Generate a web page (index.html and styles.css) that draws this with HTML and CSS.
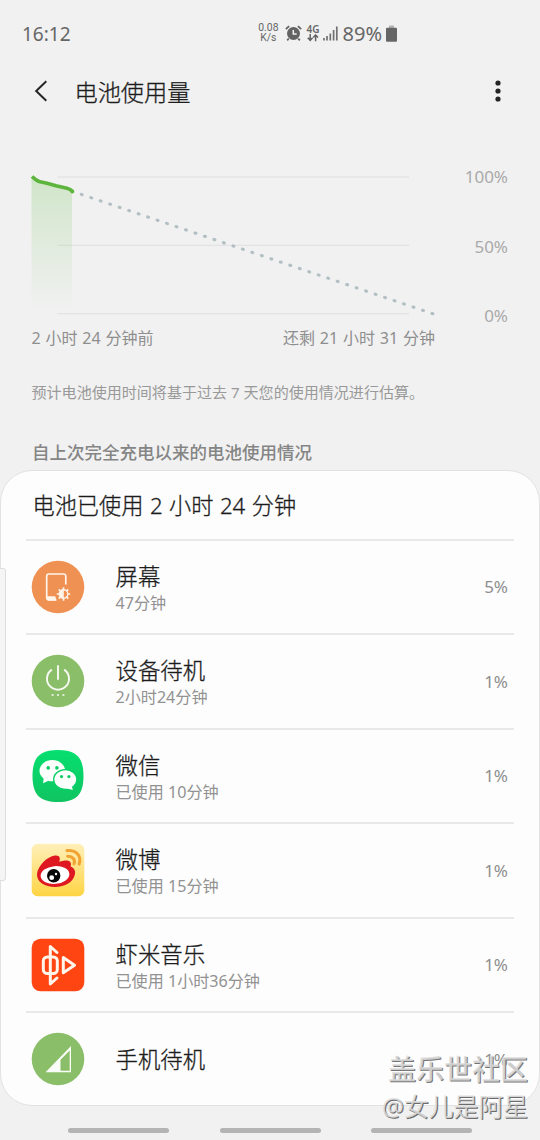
FILE: index.html
```html
<!DOCTYPE html>
<html lang="zh-CN">
<head>
<meta charset="utf-8">
<title>电池使用量</title>
<link rel="stylesheet" href="styles.css">
</head>
<body>
<div class="screen">
  <header class="status">
    <span class="clock">16:12</span>
    <span class="rate">0.08<br>K/s</span>
    <svg class="alarm" width="17" height="17" viewBox="0 0 17 17">
      <circle cx="8.5" cy="8.5" r="6.5" fill="#636363"/>
      <path d="M.9 4.2 4.1 1.2M16.1 4.2 12.9 1.2M3.8 13.5 2.2 15.4M13.2 13.5l1.6 1.9" stroke="#636363" stroke-width="1.8" fill="none"/>
      <path d="M8.3 5v4h3.4" stroke="#f1f1f1" stroke-width="1.5" fill="none"/>
    </svg>
    <span class="net"><span>4G</span>
      <svg width="12" height="8" viewBox="0 0 12 8"><path d="M3.2 0v6M.8 3.8l2.4 2.6 2.4-2.6M8.6 7.3v-6M6.2 3.6 8.6 1 11 3.6" stroke="#636363" stroke-width="1.5" fill="none"/></svg>
    </span>
    <svg class="signal" width="15" height="15" viewBox="0 0 15 15"><path d="M1 12v2.5M4 10v4.500M7.300 7.500v7M10.600 4v10.500M13.800 .5v14" stroke="#707070" stroke-width="1.700"/></svg>
    <span class="level">89%</span>
    <svg class="cell" width="11" height="17" viewBox="0 0 11 17"><path d="M3 .5h5v3H3z" fill="#b5b5b5"/><rect x="0" y="2.700" width="11" height="14" rx="1" fill="#666"/></svg>
  </header>

  <nav class="appbar">
    <svg class="back" width="14" height="22" viewBox="0 0 14 22"><path d="M12.300 1.300 2.200 11l10.100 9.700" stroke="#252525" stroke-width="2" fill="none"/></svg>
    <h1>电池使用量</h1>
    <svg class="more" width="6" height="22" viewBox="0 0 6 22" fill="#252525"><circle cx="3" cy="3" r="2.600"/><circle cx="3" cy="11" r="2.600"/><circle cx="3" cy="19" r="2.600"/></svg>
  </nav>

  <section class="chart">
    <svg class="plot" width="420" height="160" viewBox="25 165 420 160">
      <defs><linearGradient id="fade" x1="0" y1="0" x2="0" y2="1"><stop offset="0" stop-color="#69bf4b" stop-opacity=".24"/><stop offset=".5" stop-color="#69bf4b" stop-opacity=".12"/><stop offset="1" stop-color="#69bf4b" stop-opacity="0"/></linearGradient></defs>
      <path d="M57.500 177H409M57.500 245.300H409M57.500 313.600H409" stroke="#e3e3e3" stroke-width="1.300"/>
      <path d="M31.500 177 39 181.500 47 183.500 56 186 68 188.500 72 191V311H31.500Z" fill="url(#fade)"/>
      <path d="M32 176.500C35 179.500 37 180.500 39 181.500L47 183.300 56 185.800 67 188.200Q70.500 189 72.300 191.200" stroke="#5db53d" stroke-width="3.700" fill="none" stroke-linejoin="round"/>
      <circle cx="72.300" cy="191.400" r="2" fill="#5db53d"/>
      <path d="M81.300 194.400 433 313.800" stroke="#b2bfc3" stroke-width="3.100" stroke-linecap="round" stroke-dasharray=".9 9.110" fill="none"/>
    </svg>
    <div class="scale"><span>100%</span><span>50%</span><span>0%</span></div>
  </section>
  <div class="span"><span>2 小时 24 分钟前</span><span>还剩 21 小时 31 分钟</span></div>
  <p class="note">预计电池使用时间将基于过去 7 天您的使用情况进行估算。</p>
  <h2>自上次完全充电以来的电池使用情况</h2>

  <main class="card">
    <h3>电池已使用 2 小时 24 分钟</h3>
    <ul>
      <li>
        <svg class="icon" viewBox="0 0 54 54"><circle cx="27" cy="27" r="26.300" fill="#f09154"/>
          <path d="M34.800 24.500V16.300q0-2.300-2.300-2.300H18q-2.300 0-2.300 2.300v21.200q0 2.300 2.300 2.300h7" stroke="#fff4ea" stroke-width="1.700" fill="none"/><path d="M15.500 36.300h8.600l1.700 4.200H18q-2.500 0-2.500-3z" fill="#fff4ea"/>
          <circle cx="32.500" cy="34" r="4.900" fill="#fff4ea"/><path d="M32.800 30.600v6.800a3.400 3.400 0 0 0 0-6.800z" fill="#f09154"/>
          <path d="M32.500 27.300v3M32.500 37.700v3M25.800 34h3M36.200 34h3M27.800 29.300l2 2M35.200 36.700l2 2M27.800 38.700l2-2M35.200 31.300l2-2" stroke="#fff4ea" stroke-width="1.700"/></svg>
        <div class="app"><b>屏幕</b><small>47分钟</small></div><em>5%</em>
      </li>
      <li>
        <svg class="icon" viewBox="0 0 54 54"><circle cx="27" cy="27" r="26.300" fill="#8abe68"/>
          <path d="M20.800 15.600A11 11 0 1 0 33.200 15.600M27 11.300v14.500" stroke="#f7faf3" stroke-width="1.900" fill="none"/><path d="M20.600 41h2M26 41h2M31.400 41h2" stroke="#f7faf3" stroke-width="1.700"/></svg>
        <div class="app"><b>设备待机</b><small>2小时24分钟</small></div><em>1%</em>
      </li>
      <li>
        <svg class="icon" viewBox="0 0 54 54"><defs><linearGradient id="chat" x1="0" y1="0" x2="0" y2="1"><stop stop-color="#06df70"/><stop offset="1" stop-color="#10c461"/></linearGradient></defs>
          <path d="M27 1C45 1 52.500 8 52.500 27S45 53 27 53 1.500 46 1.500 27 9 1 27 1Z" fill="url(#chat)"/>
          <path d="M13 28 12 34.300l5.500-2.600z" fill="#fcfffc"/><ellipse cx="21.300" cy="21.700" rx="12.800" ry="10.600" fill="#fcfffc"/>
          <ellipse cx="34.200" cy="30.400" rx="12.200" ry="10.400" fill="#0bd069"/><ellipse cx="34.300" cy="30.500" rx="10.900" ry="9.200" fill="#fcfffc"/><path d="m35 39.300 6.800 1.800-1-4.200z" fill="#fcfffc"/>
          <g fill="#0ccb66"><circle cx="17.200" cy="18.900" r="1.800"/><circle cx="25.900" cy="18.900" r="1.800"/><circle cx="30.500" cy="27.600" r="1.600"/><circle cx="37.900" cy="27.600" r="1.600"/></g></svg>
        <div class="app"><b>微信</b><small>已使用 10分钟</small></div><em>1%</em>
      </li>
      <li>
        <svg class="icon" viewBox="0 0 54 54"><defs><linearGradient id="sun" x1="0" y1="0" x2="0" y2="1"><stop stop-color="#fff0bb"/><stop offset="1" stop-color="#fed443"/></linearGradient></defs>
          <rect x=".7" y=".7" width="52.600" height="52.600" rx="6" fill="url(#sun)"/>
          <path d="M6 31C7 23 16 13.500 24 12.600c5-.4 5.500 2.600 4.300 6.400 6-2.500 13.500-2.200 11.300 4.500 3.300 1.300 5 4 4.400 7.500C42.500 39 34 44 24 44S5.500 39 6 31Z" fill="#df1720"/>
          <ellipse cx="24" cy="32" rx="14.400" ry="8.900" transform="rotate(-5 24 32)" fill="#fff"/><circle cx="22.700" cy="32.800" r="6.700" fill="#080808"/><circle cx="20.700" cy="34.700" r="2.400" fill="#fff"/><circle cx="25" cy="31" r="1.200" fill="#fff"/>
          <path d="M36.600 13.300c5.200-.2 8 3.300 6.400 7.500M36 7.600c9.500-.8 14.800 5.500 12.200 13.500" stroke="#f1a434" stroke-width="3.100" fill="none" stroke-linecap="round"/></svg>
        <div class="app"><b>微博</b><small>已使用 15分钟</small></div><em>1%</em>
      </li>
      <li>
        <svg class="icon" viewBox="0 0 54 54"><rect x=".7" y=".7" width="52.600" height="52.600" rx="9" fill="#fe4512"/>
          <g fill="none" stroke="#fff5eb" stroke-width="3" stroke-linejoin="round" stroke-linecap="round"><path d="M26 14.500 19.300 8.500V46L26 40"/><rect x="12.300" y="19" width="14" height="16.500" rx="4"/><path d="M32.300 19.500v15.300L43.500 27.200z"/></g></svg>
        <div class="app"><b>虾米音乐</b><small>已使用 1小时36分钟</small></div><em>1%</em>
      </li>
      <li>
        <svg class="icon" viewBox="0 0 54 54"><circle cx="27" cy="27" r="26.300" fill="#8abe68"/><path d="M40 14V40.300H14.500zM38.700 18.500 29.500 27.700v11h9.200z" fill="#fafdf8" fill-rule="evenodd"/></svg>
        <div class="app"><b>手机待机</b></div><em>1%</em>
      </li>
    </ul>
  </main>
  <footer class="keys"><i></i><i></i><i></i></footer>
  <div class="edge"></div>
  <div class="mark"><span class="forum">盖乐世社区</span><span class="author">@女儿是阿星</span></div>
</div>
</body>
</html>
```
FILE: styles.css
```css
* { box-sizing: border-box; margin: 0; padding: 0; }
body { background: #f1f1f1; font-family: "Noto Sans", "Noto Sans CJK SC", sans-serif; }
.screen { position: relative; width: 540px; height: 1140px; overflow: hidden; display: flex; flex-direction: column; }
svg { display: block; flex: none; }
span, h1, h2, h3, p, b, small, em { white-space: nowrap; }

.status { height: 66px; flex: none; display: flex; align-items: center; padding: 0 143px 0 22px; color: #666; }
.clock { font-size: 19px; margin-right: auto; padding-top: 1px; }
.rate { text-align: center; font-family: Roboto, sans-serif; font-size: 10.4px; line-height: 10px; margin-right: 6px; }
.alarm { margin-right: 5px; }
.net { display: flex; flex-direction: column; align-items: center; font-size: 10px; line-height: 9px; font-weight: 600; margin-right: 3px; }
.signal { margin-right: 5px; }
.level { font-size: 20px; margin-right: 4px; }

.appbar { height: 50px; flex: none; display: flex; align-items: center; padding: 0 39px 0 34px; }
.appbar h1 { font-size: 23.2px; font-weight: 300; color: #1c1c1c; -webkit-text-stroke: .3px #1c1c1c; margin: -1px auto 0 26.5px; }

.chart { height: 160px; flex: none; margin-top: 49px; padding: 0 32px 0 25px; display: flex; justify-content: space-between; }
.scale { display: flex; flex-direction: column; justify-content: space-between; height: 161px; padding-top: 2px; text-align: right; font-size: 17px; line-height: 20px; color: #aaa; }
.span { display: flex; justify-content: space-between; width: 403.5px; margin: 1px 0 0 31.5px; font-size: 16px; line-height: 24px; word-spacing: .7px; color: #8e8e8e; }
.note { margin: 29px 0 0 31.5px; font-size: 15.05px; line-height: 26px; color: #999; }
h2 { margin: 34px 0 0 32px; font-size: 17.5px; line-height: 26px; font-weight: 500; color: #858585; }

.card { height: 636px; flex: none; margin-top: 5px; background: #fdfdfd; border: 1px solid #e2e2e2; border-radius: 32px; padding: 0 25px; }
h3 { height: 67.5px; padding-left: 6.5px; font-size: 22.2px; line-height: 70px; font-weight: 300; -webkit-text-stroke: .3px #1c1c1c; word-spacing: .7px; color: #1c1c1c; }
ul { list-style: none; }
li { height: 94.5px; border-top: 2px solid #e8e8e8; display: flex; align-items: center; padding: 0 6px 0 5px; }
.icon { width: 54px; height: 54px; }
.app { margin: 2px auto 0 30.5px; display: flex; flex-direction: column; }
.app b { font-size: 22.4px; line-height: 30px; font-weight: 300; color: #1c1c1c; -webkit-text-stroke: .3px #1c1c1c; }
.app small { font-size: 16.1px; line-height: 22px; color: #929292; }
li em { font-style: normal; font-size: 17px; color: #8e8e8e; }

.keys { flex: 1; display: flex; justify-content: space-between; align-items: flex-end; padding: 0 68px 7.5px; }
.keys i { width: 101px; height: 4.5px; border-radius: 3px; background: #b4b4b4; }

.edge { position: absolute; left: -4px; top: 568px; width: 10px; height: 313px; border: 1px solid #ddd; border-radius: 3px; background: #f5f5f5; }
.mark { position: absolute; right: 12px; top: 1050px; display: flex; flex-direction: column; align-items: flex-end; color: rgba(222,222,222,.85); }
.forum { font-size: 28px; line-height: 38px; font-weight: 500; text-shadow: 1px 1px 0 #777; }
.author { font-size: 24.8px; line-height: 36px; text-shadow: 1px 1px 0 #6b6b6b; }
```
